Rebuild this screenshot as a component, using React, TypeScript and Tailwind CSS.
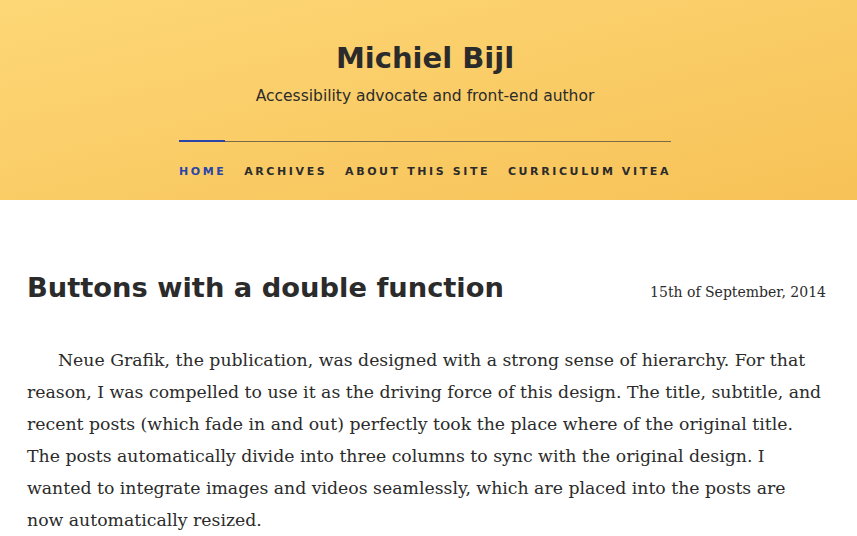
import React from 'react';

const navItems = ['Home', 'Archives', 'About this site', 'Curriculum Vitea'];

const App: React.FC = () => {
  return (
    <div className="min-h-screen bg-white text-[#2b2b2b]">
      <header className="h-[200px] bg-gradient-to-br from-[#fdd776] to-[#f7c257] pr-[7px] pt-[38px]">
        <div className="mx-auto w-[492px] text-center font-['DejaVu_Sans',sans-serif]">
          <h1 className="text-[29px] font-bold leading-[40px] text-[#2b2b2b]">Michiel Bijl</h1>
          <p className="mt-[7px] text-[15.5px] leading-[22px] text-[#2b2b2b]">Accessibility advocate and front-end author</p>
          <nav className="mt-[33px]">
            <div className="flex h-[2px] items-end">
              <div className="h-[2px] w-[46px] bg-[#2a44a8]" />
              <div className="h-px flex-1 bg-[#7a6a45]" />
            </div>
            <ul className="mt-[22px] flex justify-between text-[11px] font-bold uppercase leading-[16px] tracking-[2.6px]">
              {navItems.map((item, i) => (
                <li key={item} className={i === 0 ? 'text-[#2a44a8]' : 'text-[#2b2b2b]'}>
                  {item}
                </li>
              ))}
            </ul>
          </nav>
        </div>
      </header>

      <main className="px-[27px] pt-[68px]">
        <div className="flex items-baseline justify-between pr-[4px]">
          <h2 className="font-['DejaVu_Sans',sans-serif] text-[27.3px] font-bold leading-[40px]">
            Buttons with a double function
          </h2>
          <span className="font-['DejaVu_Serif',serif] text-[14px]">15th of September, 2014</span>
        </div>
        <p className="mt-[36px] w-[800px] indent-[31px] font-['DejaVu_Serif',serif] text-[17.3px] leading-[32px]">
          Neue Grafik, the publication, was designed with a strong sense of hierarchy. For that reason, I was
          compelled to use it as the driving force of this design. The title, subtitle, and recent posts (which
          fade in and out) perfectly took the place where of the original title. The posts automatically divide
          into three columns to sync with the original design. I wanted to integrate images and videos
          seamlessly, which are placed into the posts are now automatically resized.
        </p>
      </main>
    </div>
  );
};

export default App;
